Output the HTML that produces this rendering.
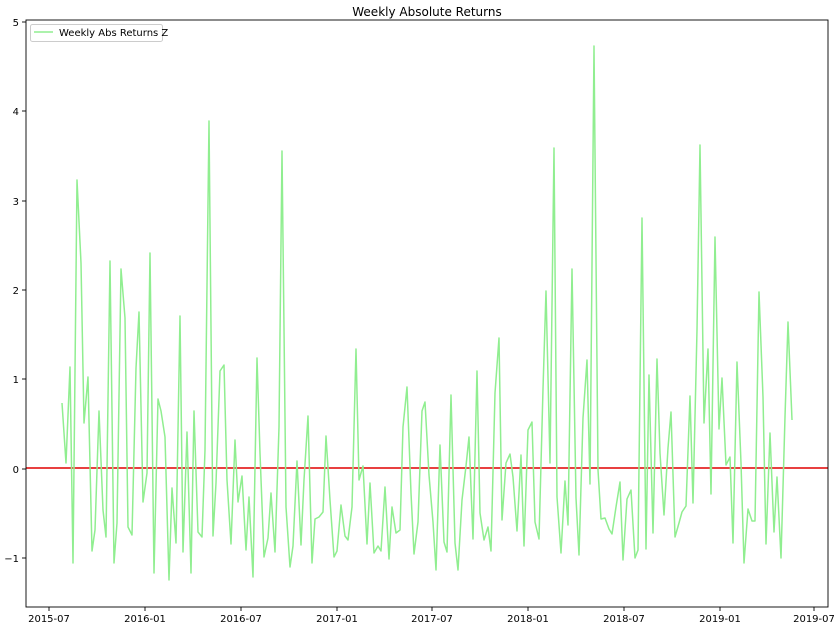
<!DOCTYPE html>
<html><head><meta charset="utf-8"><style>
html,body{margin:0;padding:0;background:#fff;}
svg{display:block;font-family:"DejaVu Sans","Liberation Sans",sans-serif;}
</style></head><body>
<svg width="840" height="629" viewBox="0 0 840 629" xmlns="http://www.w3.org/2000/svg">
<rect width="840" height="629" fill="#fff"/>
<text x="427" y="16" font-size="12" text-anchor="middle" fill="#000">Weekly Absolute Returns</text>
<line x1="26" y1="468" x2="828" y2="468" stroke="#e00000" stroke-width="1.5"/>
<polyline fill="none" stroke="#90ee90" stroke-width="1.5" stroke-linejoin="round" points="
62,403 66,463 70,367 73,563 77,180 81,263 84,423 88,377 92,551 95,530 99,411 103,510 106,537 110,261 114,563 117,523 121,269 125,318 128,527 132,535 136,368 139,312 143,502 147,473 150,253 154,573 158,399 161,411 165,437 169,580 172,488 176,543 180,316 183,552 187,432 191,573 194,411 198,532 202,537 205,450 209,121 213,536 216,483 220,371 224,365 227,480 231,544 235,440 238,502 242,476 246,550 249,497 253,577 257,358 260,453 264,557 268,538 271,493 275,552 279,427 282,151 286,507 290,567 293,546 297,461 301,545 304,480 308,416 312,563 315,519 319,517 323,512 326,436 330,500 334,557 337,551 341,505 345,536 348,540 352,507 356,349 359,480 363,466 367,544 370,483 374,553 378,546 381,551 385,487 389,559 392,507 396,533 400,530 403,427 407,387 411,493 414,554 418,522 422,411 425,402 429,475 433,522 436,570 440,445 444,542 447,552 451,395 455,543 458,570 462,500 466,466 469,437 473,539 477,371 480,513 484,540 488,527 491,551 495,393 499,338 502,520 506,463 510,454 513,477 517,531 521,455 524,546 528,430 532,422 535,522 539,539 543,389 546,291 550,463 554,148 557,497 561,553 565,481 568,525 572,269 576,498 579,555 583,418 587,360 590,484 594,46 598,470 601,519 605,518 609,529 612,534 616,507 620,482 623,560 627,499 631,490 635,558 638,550 642,218 646,549 649,375 653,533 657,359 660,453 664,515 668,448 671,412 675,537 679,523 682,512 686,506 690,396 693,503 697,330 700,145 704,423 708,349 711,494 715,237 719,429 722,378 726,465 730,457 733,543 737,362 741,463 744,563 748,509 752,521 755,521 759,292 763,397 766,544 770,433 774,532 777,477 781,558 785,417 788,322 792,420"/>
<rect x="26" y="20" width="802" height="587" fill="none" stroke="#000" stroke-width="0.9"/>
<g stroke="#000" stroke-width="0.9">
<line x1="22" y1="22" x2="26" y2="22"/><line x1="22" y1="111" x2="26" y2="111"/><line x1="22" y1="201" x2="26" y2="201"/><line x1="22" y1="290" x2="26" y2="290"/><line x1="22" y1="379" x2="26" y2="379"/><line x1="22" y1="469" x2="26" y2="469"/><line x1="22" y1="558" x2="26" y2="558"/>
<line x1="49" y1="607" x2="49" y2="611"/><line x1="145" y1="607" x2="145" y2="611"/><line x1="241" y1="607" x2="241" y2="611"/><line x1="337" y1="607" x2="337" y2="611"/><line x1="432" y1="607" x2="432" y2="611"/><line x1="528" y1="607" x2="528" y2="611"/><line x1="624" y1="607" x2="624" y2="611"/><line x1="720" y1="607" x2="720" y2="611"/><line x1="814" y1="607" x2="814" y2="611"/>
</g>
<g font-size="10" fill="#000" text-anchor="end">
<text x="19" y="26">5</text><text x="19" y="115">4</text><text x="19" y="205">3</text><text x="19" y="294">2</text><text x="19" y="383">1</text><text x="19" y="473">0</text><text x="19" y="562">−1</text>
</g>
<g font-size="10" fill="#000" text-anchor="middle">
<text x="49" y="622">2015-07</text><text x="145" y="622">2016-01</text><text x="241" y="622">2016-07</text><text x="337" y="622">2017-01</text><text x="432" y="622">2017-07</text><text x="528" y="622">2018-01</text><text x="624" y="622">2018-07</text><text x="720" y="622">2019-01</text><text x="814" y="622">2019-07</text>
</g>
<rect x="30.5" y="24.5" width="132" height="17" rx="2" fill="#fff" stroke="#ccc" stroke-width="1"/>
<line x1="34" y1="32" x2="53" y2="32" stroke="#90ee90" stroke-width="1.5"/>
<text x="59" y="36" font-size="10" fill="#000">Weekly Abs Returns Z</text>
</svg>
</body></html>
